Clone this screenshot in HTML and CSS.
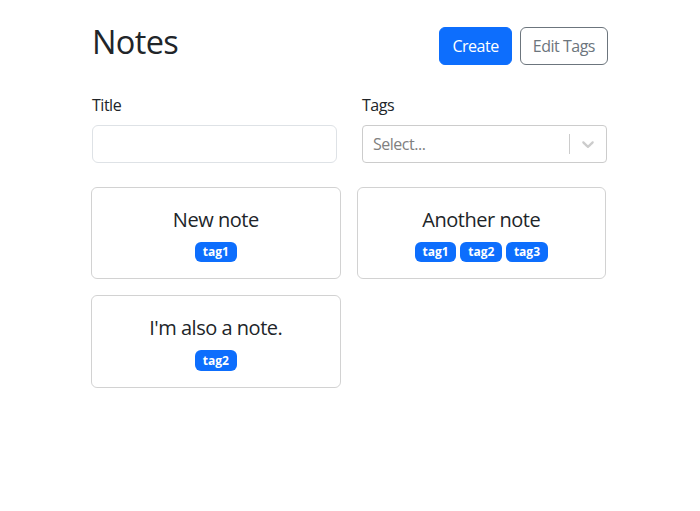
FILE: index.html
```html
<!DOCTYPE html>
<html lang="en">
<head>
<meta charset="utf-8">
<title>Notes</title>
<link rel="stylesheet" href="styles.css">
</head>
<body>
<div class="container">
  <div class="header">
    <h1 class="title">Notes</h1>
    <div class="actions">
      <button class="btn btn-primary">Create</button>
      <button class="btn btn-outline">Edit Tags</button>
    </div>
  </div>
  <form class="filters">
    <div class="field">
      <label class="label" for="title">Title</label>
      <input class="input" id="title" type="text">
    </div>
    <div class="field">
      <label class="label">Tags</label>
      <div class="select">
        <div class="select-value"><span class="placeholder">Select...</span></div>
        <div class="select-indicators">
          <span class="separator"></span>
          <span class="dropdown">
            <svg viewBox="0 0 20 20" width="20" height="20" aria-hidden="true"><path fill="currentColor" d="M4.516 7.548c0.436-0.446 1.043-0.481 1.576 0l3.908 3.747 3.908-3.747c0.533-0.481 1.141-0.446 1.574 0 0.436 0.445 0.408 1.197 0 1.615-0.406 0.418-4.695 4.502-4.695 4.502-0.217 0.223-0.502 0.335-0.787 0.335s-0.57-0.112-0.789-0.335c0 0-4.287-4.084-4.695-4.502s-0.436-1.17 0-1.615z"/></svg>
          </span>
        </div>
      </div>
    </div>
  </form>
  <div class="cards">
    <div class="card">
      <span class="card-title">New note</span>
      <div class="badges"><span class="badge">tag1</span></div>
    </div>
    <div class="card">
      <span class="card-title">Another note</span>
      <div class="badges"><span class="badge">tag1</span><span class="badge">tag2</span><span class="badge">tag3</span></div>
    </div>
    <div class="card">
      <span class="card-title">I'm also a note.</span>
      <div class="badges"><span class="badge">tag2</span></div>
    </div>
  </div>
</div>
</body>
</html>
```
FILE: styles.css
```css
* { box-sizing: border-box; }
body {
  margin: 0;
  font-family: "Open Sans", "Noto Sans", sans-serif;
  font-size: 16px;
  line-height: 1.5;
  letter-spacing: -0.03em;
  color: #212529;
  background: #fff;
}
.container {
  width: 516px;
  margin: 0 auto;
  padding-top: 22px;
}
.header {
  display: flex;
  align-items: center;
  justify-content: space-between;
  margin-bottom: 24px;
}
.title {
  margin: 0 0 8px;
  font-size: 32.5px;
  font-weight: 500;
  line-height: 1.2;
  letter-spacing: -0.02em;
}
.actions {
  display: flex;
  gap: 8px;
}
.btn {
  font-family: inherit;
  font-size: 16px;
  line-height: 24px;
  letter-spacing: -0.03em;
  padding: 6px 12px;
  border-radius: 6px;
  border: 1px solid transparent;
  cursor: pointer;
}
.btn-primary {
  background: #0d6efd;
  border-color: #0d6efd;
  color: #fff;
}
.btn-outline {
  background: #fff;
  border-color: #6c757d;
  color: #6c757d;
}
.filters {
  display: grid;
  grid-template-columns: 1fr 1fr;
  column-gap: 24px;
  margin: 0 0 24px;
}
.field { display: flex; flex-direction: column; }
.label {
  display: block;
  margin-bottom: 8px;
}
.input {
  height: 38px;
  width: 245px;
  border: 1px solid #dee2e6;
  border-radius: 6px;
  font: inherit;
  padding: 6px 12px;
}
.select {
  display: flex;
  min-height: 38px;
  width: 245px;
  border: 1px solid #ccc;
  border-radius: 4px;
  background: #fff;
}
.select-value {
  flex: 1;
  display: flex;
  align-items: center;
  padding: 2px 8px;
}
.placeholder {
  margin: 0 2px;
  color: #808080;
}
.select-indicators {
  display: flex;
  align-items: stretch;
}
.separator {
  width: 1px;
  margin: 8px 0;
  background: #ccc;
}
.dropdown {
  display: flex;
  align-items: center;
  padding: 8px;
  color: #ccc;
}
.dropdown svg { display: block; }
.cards {
  display: grid;
  grid-template-columns: 1fr 1fr;
  gap: 16px;
  margin-left: -1px;
  width: 515px;
}
.card {
  display: flex;
  flex-direction: column;
  align-items: center;
  gap: 8px;
  padding: 16px;
  border: 1px solid rgba(0, 0, 0, 0.175);
  border-radius: 6px;
}
.card-title {
  font-size: 20px;
  line-height: 30px;
  margin: 1px 0 -1px;
}
.badges {
  display: flex;
  justify-content: center;
  gap: 4px;
}
.badge {
  display: inline-block;
  background: #0d6efd;
  color: #fff;
  font-size: 12px;
  font-weight: 700;
  line-height: 1;
  letter-spacing: 0;
  padding: 4.2px 7.8px;
  border-radius: 6px;
}
```
